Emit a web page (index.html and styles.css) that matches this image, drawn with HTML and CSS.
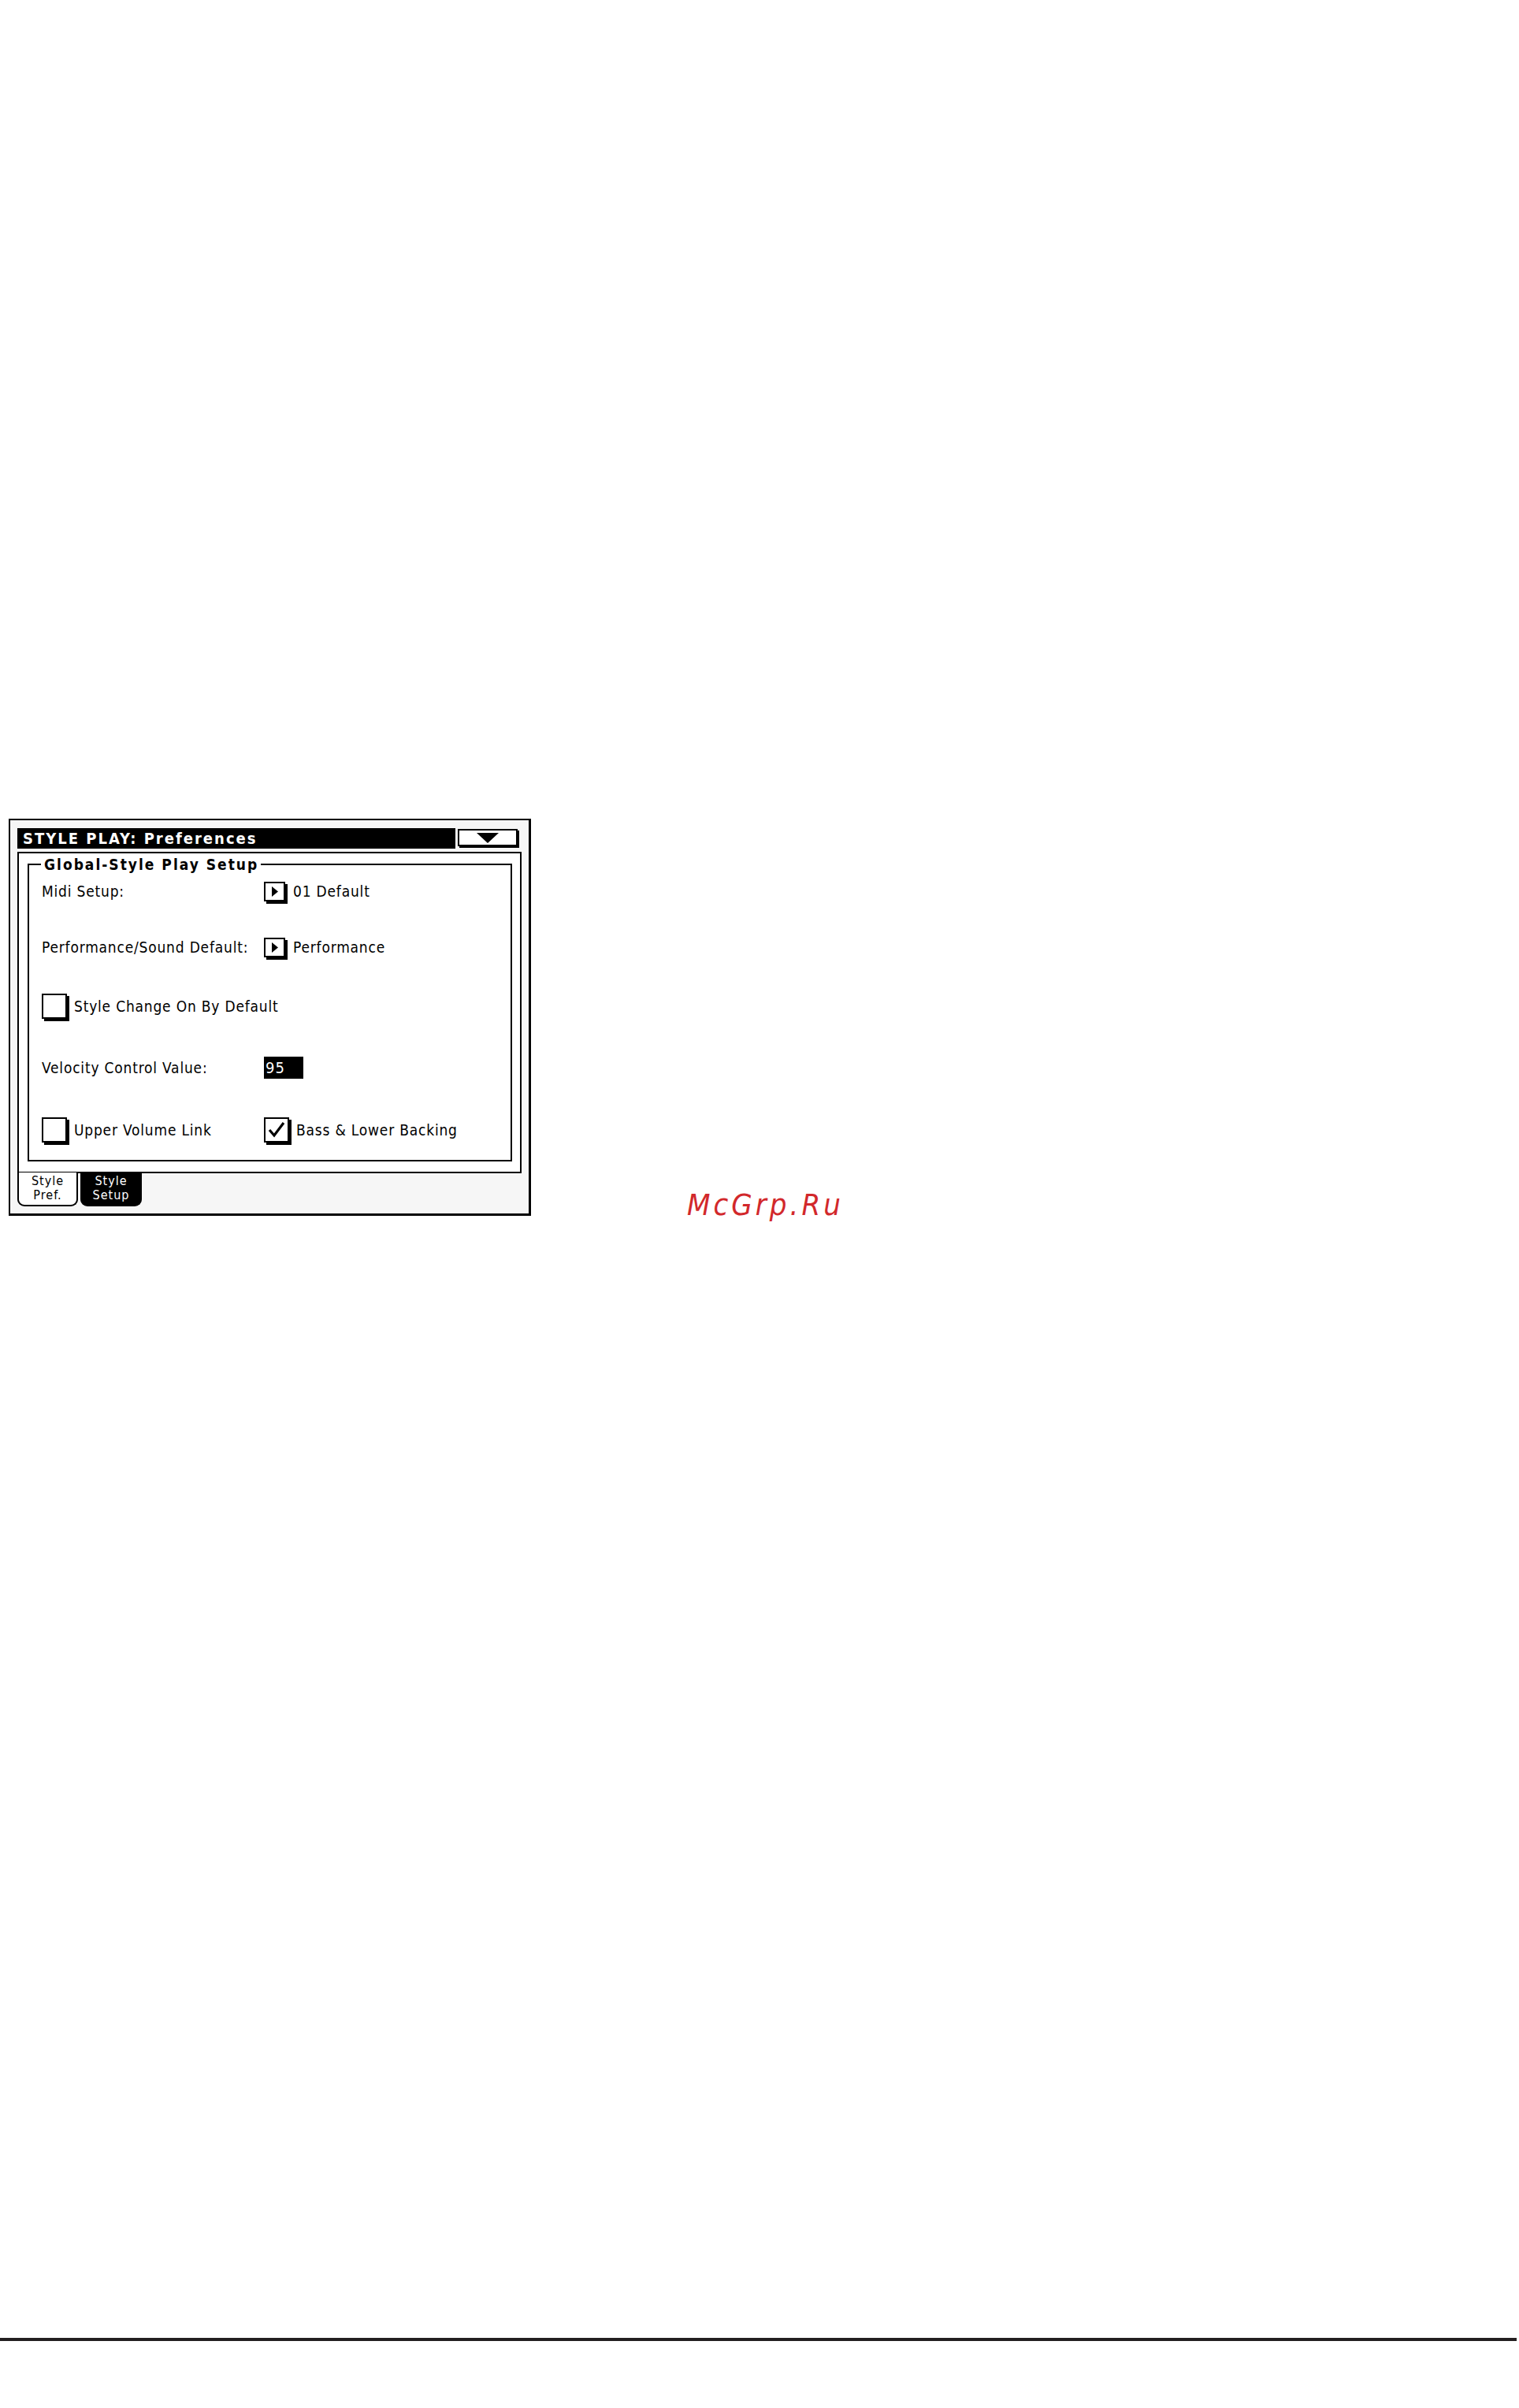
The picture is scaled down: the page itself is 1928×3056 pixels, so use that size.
FILE: index.html
```html
<!DOCTYPE html>
<html lang="en">
<head>
<meta charset="utf-8">
<title>STYLE PLAY: Preferences</title>
<link rel="stylesheet" href="styles.css">
</head>
<body>
<div class="page">
  <div class="figure-row">
    <div class="panel">
      <div class="title-row">
        <div class="title-bar">STYLE PLAY: Preferences</div>
        <div class="drop-btn">
          <svg class="drop-icon" width="28" height="13" viewBox="0 0 28 13"><path d="M0 0H28L14 13Z" fill="#000"/></svg>
        </div>
      </div>
      <div class="frame">
        <div class="group">
          <div class="group-title">Global-Style Play Setup</div>
          <div class="grid">
            <div class="label">Midi Setup:</div>
            <div class="ctrl">
              <span class="arrow-btn"><svg width="8" height="13" viewBox="0 0 8 13"><path d="M0 0L8 6.5L0 13Z" fill="#000"/></svg></span>
              <span class="value">01 Default</span>
            </div>

            <div class="label">Performance/Sound Default:</div>
            <div class="ctrl">
              <span class="arrow-btn"><svg width="8" height="13" viewBox="0 0 8 13"><path d="M0 0L8 6.5L0 13Z" fill="#000"/></svg></span>
              <span class="value">Performance</span>
            </div>

            <div class="ctrl span-all">
              <span class="check"></span>
              <span class="value">Style Change On By Default</span>
            </div>

            <div class="label">Velocity Control Value:</div>
            <div class="ctrl">
              <span class="num-box">95</span>
            </div>

            <div class="ctrl">
              <span class="check"></span>
              <span class="value">Upper Volume Link</span>
            </div>
            <div class="ctrl">
              <span class="check"><svg width="28" height="28" viewBox="0 0 28 28"><path d="M5 14L11 21L23 5" fill="none" stroke="#000" stroke-width="3.2"/></svg></span>
              <span class="value">Bass &amp; Lower Backing</span>
            </div>
          </div>
        </div>
      </div>
      <div class="tabs">
        <div class="tab">Style<br>Pref.</div>
        <div class="tab tab-active">Style<br>Setup</div>
      </div>
    </div>
    <div class="watermark">McGrp.Ru</div>
  </div>
  <div class="rule"></div>
</div>
</body>
</html>
```

FILE: styles.css
```css
html, body {
  margin: 0;
  padding: 0;
  background: #fff;
}

.page {
  width: 1928px;
  height: 3056px;
  padding-top: 1039px;
  box-sizing: border-box;
  font-family: "DejaVu Sans Condensed", "DejaVu Sans", sans-serif;
  font-stretch: condensed;
  color: #000;
}

.figure-row {
  display: flex;
  align-items: flex-end;
  padding-left: 11px;
}

.panel {
  width: 663px;
  box-sizing: border-box;
  border-style: solid;
  border-color: #000;
  border-width: 2px 3px 3px 2px;
  background: #f6f6f6;
  padding: 10px 9px 9px 9px;
}

.title-row {
  display: flex;
  align-items: flex-start;
  gap: 3px;
}

.title-bar {
  width: 556px;
  height: 26px;
  background: #000;
  color: #fff;
  font-weight: bold;
  font-size: 20px;
  letter-spacing: 2px;
  line-height: 26px;
  padding-left: 7px;
  box-sizing: border-box;
  white-space: nowrap;
}

.drop-btn {
  width: 76px;
  height: 22px;
  margin-top: 1px;
  box-sizing: border-box;
  border: 2px solid #000;
  background: #fff;
  box-shadow: 2px 2px 0 #000;
  display: flex;
  justify-content: center;
  align-items: center;
}

.drop-icon {
  display: block;
  margin-top: 1px;
}

.frame {
  margin-top: 4px;
  width: 640px;
  height: 408px;
  box-sizing: border-box;
  border: 2px solid #000;
  background: #fff;
  padding: 13px 10px 13px 11px;
}

.group {
  border: 2px solid #000;
  height: 378px;
  box-sizing: border-box;
}

.group-title {
  width: fit-content;
  margin: -12px 0 -10px 15px;
  padding: 0 3px 0 4px;
  background: #fff;
  font-weight: bold;
  font-size: 19px;
  letter-spacing: 2px;
  line-height: 22px;
  white-space: nowrap;
  position: relative;
}

.grid {
  display: grid;
  grid-template-columns: 282px 1fr;
  grid-template-rows: 66px 76px 74px 82px 76px;
  align-items: center;
  padding-left: 16px;
  font-size: 19px;
  letter-spacing: 0.8px;
  line-height: 22px;
}

.label,
.value {
  white-space: nowrap;
}

.ctrl {
  display: flex;
  align-items: center;
}

.span-all {
  grid-column: 1 / -1;
}

.arrow-btn {
  width: 27px;
  height: 25px;
  box-sizing: border-box;
  border: 2px solid #000;
  background: #fff;
  box-shadow: 3px 3px 0 #000;
  display: flex;
  justify-content: center;
  align-items: center;
  margin-right: 10px;
  flex: none;
}

.arrow-btn svg {
  display: block;
}

.check {
  width: 32px;
  height: 32px;
  box-sizing: border-box;
  border: 2px solid #000;
  background: #fff;
  box-shadow: 3px 3px 0 #000;
  margin-right: 9px;
  flex: none;
}

.check svg {
  display: block;
}

.num-box {
  width: 50px;
  height: 28px;
  box-sizing: border-box;
  background: #000;
  color: #fff;
  padding-left: 2px;
  font-size: 20px;
  letter-spacing: 1px;
  line-height: 28px;
}

.tabs {
  display: flex;
  gap: 3px;
  margin-top: -1px;
}

.tab {
  width: 77px;
  height: 43px;
  box-sizing: border-box;
  border: 2px solid #000;
  border-top: none;
  border-radius: 0 0 9px 9px;
  background: #fff;
  text-align: center;
  font-size: 16px;
  letter-spacing: 1px;
  line-height: 18px;
  padding-top: 2px;
}

.tab-active {
  width: 78px;
  background: #000;
  color: #fff;
}

.watermark {
  margin-left: 198px;
  margin-bottom: -5px;
  color: #d2282b;
  font-family: "DejaVu Sans", sans-serif;
  font-style: oblique;
  font-size: 38px;
  line-height: 38px;
  letter-spacing: 4px;
}

.rule {
  margin-top: 1424px;
  width: 1925px;
  height: 4px;
  background: #231f20;
}
```
